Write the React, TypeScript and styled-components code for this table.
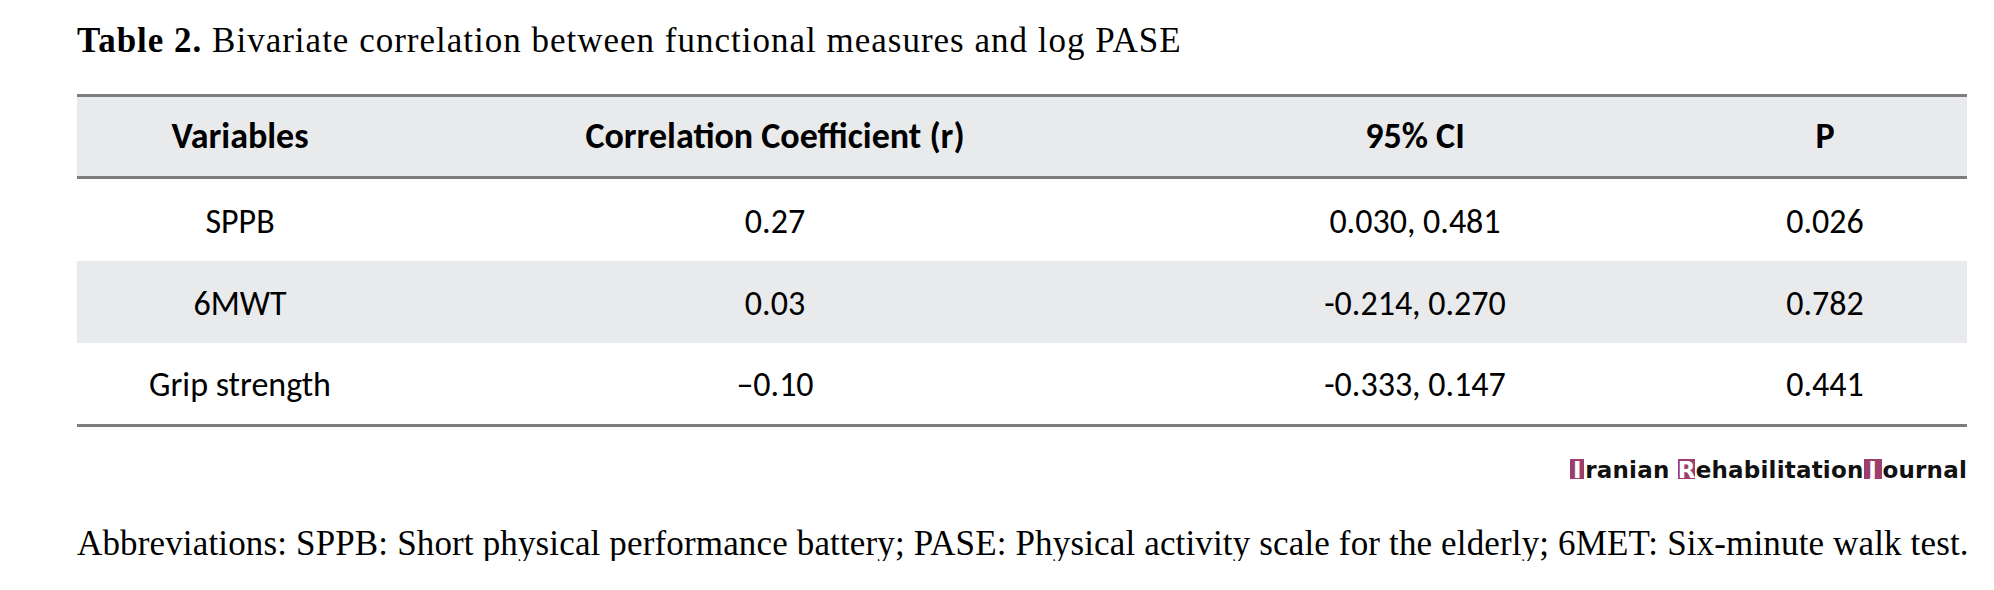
import React from "react";
import styled, { createGlobalStyle } from "styled-components";

const GlobalStyle = createGlobalStyle`
    body {
        margin: 0;
        background: #ffffff;
        color: #000000;
    }
`;

const rows = [
    { variable: "SPPB", r: "0.27", ci: "0.030, 0.481", p: "0.026" },
    { variable: "6MWT", r: "0.03", ci: "-0.214, 0.270", p: "0.782" },
    { variable: "Grip strength", r: "\u20130.10", ci: "-0.333, 0.147", p: "0.441" },
];

function App() {
    return (
        <Page>
            <GlobalStyle />
            <Caption>
                <b>Table 2.</b> Bivariate correlation between functional measures and log PASE
            </Caption>
            <Table>
                <HeadRow>
                    <HeadCell>Variables</HeadCell>
                    <HeadCell>Correlation Coefficient (r)</HeadCell>
                    <HeadCell>95% CI</HeadCell>
                    <HeadCell>P</HeadCell>
                </HeadRow>
                {rows.map((row, i) => (
                    <BodyRow key={row.variable} $shaded={i % 2 === 1} $last={i === rows.length - 1}>
                        <Cell>{row.variable}</Cell>
                        <Cell>{row.r}</Cell>
                        <Cell>{row.ci}</Cell>
                        <Cell>{row.p}</Cell>
                    </BodyRow>
                ))}
            </Table>
            <LogoRow>
                <Logo>
                    <Initial $w={14}>I</Initial>ranian <Initial $w={17}>R</Initial>ehabilitation<Initial $w={18}>J</Initial>ournal
                </Logo>
            </LogoRow>
            <Footnote>
                Abbreviations: SPPB: Short physical performance battery; PASE: Physical activity scale for the elderly; 6MET: Six-minute walk test.
            </Footnote>
        </Page>
    );
}

export default App;

const Page = styled.div`
    width: 1890px;
    padding-left: 77px;
`;

const Caption = styled.div`
    margin: 23px 0 36px;
    font-family: "Liberation Serif", "Times New Roman", serif;
    font-size: 35px;
    line-height: 35px;
    letter-spacing: 1px;
    white-space: nowrap;
`;

const Table = styled.div`
    border-top: 3px solid #7d7d7d;
    border-bottom: 3px solid #7d7d7d;
`;

const Row = styled.div`
    display: grid;
    grid-template-columns: 326px 744px 536px 284px;
    align-items: center;
    font-family: Carlito, Calibri, "Open Sans", sans-serif;
`;

const HeadRow = styled(Row)`
    height: 79px;
    background: #e9eaec;
    border-bottom: 3px solid #7d7d7d;
    font-weight: 700;
    font-size: 36px;
`;

const BodyRow = styled(Row)<{ $shaded: boolean; $last: boolean }>`
    height: ${(p) => (p.$last ? 81 : 82)}px;
    padding-top: 4px;
    box-sizing: border-box;
    background: ${(p) => (p.$shaded ? "#e9eaec" : "#ffffff")};
    font-size: 34px;
`;

const HeadCell = styled.div`
    text-align: center;
    line-height: 1.2;
`;

const Cell = styled.div`
    text-align: center;
    line-height: 1.2;
`;

const LogoRow = styled.div`
    display: flex;
    justify-content: flex-end;
    margin-top: 32px;
`;

const Logo = styled.div`
    font-family: "DejaVu Sans", sans-serif;
    font-weight: 700;
    font-size: 23px;
    line-height: 20px;
    letter-spacing: 0.2px;
    color: #111111;
    white-space: pre;
`;

const Initial = styled.span<{ $w: number }>`
    display: inline-block;
    width: ${(p) => p.$w}px;
    margin-right: 1px;
    height: 20px;
    background: #9c3d6b;
    color: #ffffff;
    text-align: center;
    line-height: 22px;
    letter-spacing: 0;
`;

const Footnote = styled.div`
    margin-top: 46px;
    font-family: "Liberation Serif", "Times New Roman", serif;
    font-size: 35px;
    line-height: 35px;
    letter-spacing: 0.15px;
    white-space: nowrap;
`;
